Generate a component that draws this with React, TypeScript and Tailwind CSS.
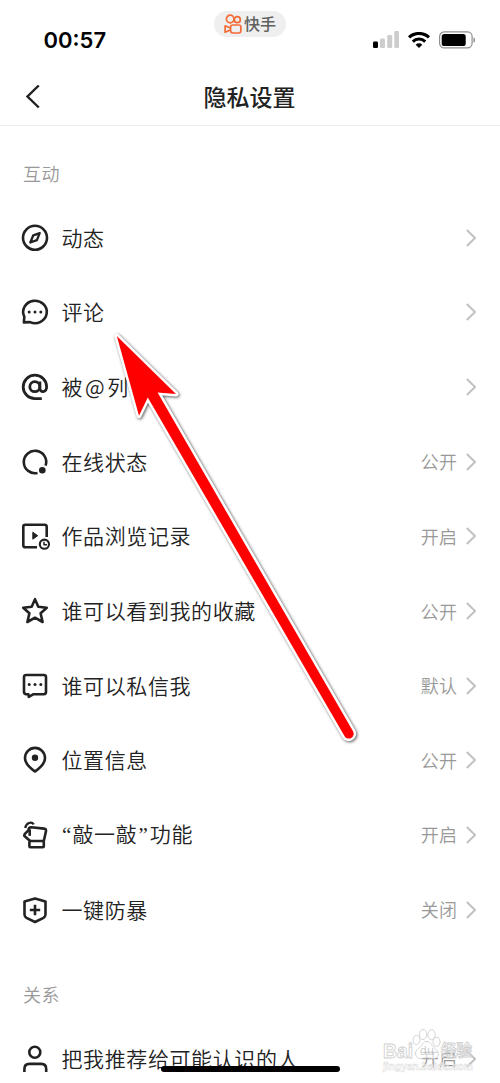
import type { ReactNode } from "react";

interface RowProps {
  icon: ReactNode;
  label: ReactNode;
  value?: string;
}

const Icon = ({ children }: { children: ReactNode }) => (
  <svg
    viewBox="0 0 28 28"
    className="size-7 shrink-0 overflow-visible"
    fill="none"
    stroke="#222"
    strokeWidth="2.6"
    strokeLinejoin="round"
  >
    {children}
  </svg>
);

const Dots = ({ y }: { y: number }) => (
  <g fill="#222" stroke="none">
    <circle cx="8.2" cy={y} r="1.5" />
    <circle cx="14" cy={y} r="1.5" />
    <circle cx="19.8" cy={y} r="1.5" />
  </g>
);

const icons = {
  compass: (
    <Icon>
      <circle cx="14" cy="13.8" r="12" />
      <path d="M18.7 9.1 12.3 11.3 9.3 18.5 15.9 16.1Z" strokeWidth="2.3" />
    </Icon>
  ),
  comment: (
    <Icon>
      <path d="M2.9 24.4 3.3 18.7A11.8 11.2 0 1 1 9 24.1Z" />
      <Dots y={13.9} />
    </Icon>
  ),
  at: (
    <Icon>
      <circle cx="13.8" cy="13.7" r="5" strokeWidth="2.8" />
      <path d="M18.9 8.4V15.2C18.9 20 25.6 19.8 25.6 13.8A11.7 11.7 0 1 0 14 25.6H20.8" strokeWidth="2.8" />
    </Icon>
  ),
  online: (
    <Icon>
      <path d="M16.5 24.9A11.2 11.2 0 1 1 24.6 17.6" />
      <circle cx="21.3" cy="22.3" r="3.3" fill="#222" stroke="none" />
    </Icon>
  ),
  history: (
    <Icon>
      <path d="M16 25.2H4.4Q2.3 25.2 2.3 23.2V4.6Q2.3 2.7 4.4 2.7H23.5Q25.7 2.7 25.7 4.8V15" />
      <path d="M11.8 10.2 16.7 13.7 11.8 17.2Z" fill="#222" strokeWidth="1" />
      <circle cx="23.4" cy="22.2" r="4.6" strokeWidth="2.1" />
      <path d="M23 19.8V22.7H26" strokeWidth="1.5" />
    </Icon>
  ),
  star: (
    <Icon>
      <path d="M14 2.2 17.3 9.8 25.8 10.7 19.6 16.3 21.6 25 14 20.7 6.4 25 8.4 16.3 2.2 10.7 10.7 9.8Z" />
    </Icon>
  ),
  message: (
    <Icon>
      <path d="M5.2 3H22.8Q25 3 25 5.1V20.1Q25 22.2 22.8 22.2H12.6L7.8 24.8 7.4 22.2H5.2Q3 22.2 3 20.1V5.1Q3 3 5.2 3Z" />
      <Dots y={12.6} />
    </Icon>
  ),
  pin: (
    <Icon>
      <path d="M14 25.5C10.5 23 4 18.5 4 12.2A10 10.3 0 0 1 24 12.2C24 18.5 17.5 23 14 25.5Z" />
      <circle cx="14" cy="11.8" r="3.2" fill="#222" stroke="none" />
    </Icon>
  ),
  knock: (
    <Icon>
      <path d="M9.2 20 4 15.6Q2.8 14.4 3.6 13.2L7.4 9.4Q7.6 6.2 10.2 6.2L23 7.6Q25.3 8 25 10L22.8 20" />
      <path d="M8.7 8.4V14.8" />
      <path d="M4.2 7C5.2 1.6 10.4.2 12.8 3.4" strokeWidth="2.3" />
      <rect x="8.4" y="20" width="14.4" height="6.3" rx="1" />
    </Icon>
  ),
  shield: (
    <Icon>
      <path d="M14 2.6 24.5 5.4V18.6Q24.5 20.6 22.5 21.8L14 26 5.5 21.8Q3.5 20.6 3.5 18.6V5.4Z" />
      <path d="M14 8.8V19.2M8.8 14H19.2" />
    </Icon>
  ),
  person: (
    <Icon>
      <circle cx="13.8" cy="7.2" r="5.5" />
      <path d="M3.4 27.5V24Q3.4 18.9 8.4 18.9H20.2Q25.2 18.9 25.2 24V27.5" />
    </Icon>
  ),
};

const interactions: RowProps[] = [
  { icon: icons.compass, label: "动态" },
  { icon: icons.comment, label: "评论" },
  { icon: icons.at, label: <>被<span className="ml-[2px] mr-[2px]">@</span>列表</> },
  { icon: icons.online, label: "在线状态", value: "公开" },
  { icon: icons.history, label: "作品浏览记录", value: "开启" },
  { icon: icons.star, label: "谁可以看到我的收藏", value: "公开" },
  { icon: icons.message, label: "谁可以私信我", value: "默认" },
  { icon: icons.pin, label: "位置信息", value: "公开" },
  {
    icon: icons.knock,
    label: (
      <>
        <span className="inline-block w-[11px] text-center font-['Liberation_Serif'] leading-none">“</span>敲一敲
        <span className="inline-block w-[12.5px] text-center font-['Liberation_Serif'] leading-none">”</span>功能
      </>
    ),
    value: "开启",
  },
  { icon: icons.shield, label: "一键防暴", value: "关闭" },
];

const SettingRow = ({ icon, label, value }: RowProps) => (
  <li className="flex h-[74.65px] items-center pl-[21px] pr-6">
    {icon}
    <span className="ml-[12.5px] pb-[1px] text-[21px] font-[350] leading-none tracking-[0.6px] text-[#222]">{label}</span>
    <span className="ml-auto pb-[1px] text-[18px] font-[350] leading-none tracking-[0.4px] text-[#999]">{value}</span>
    <svg viewBox="0 0 10 18" className="ml-[8.5px] h-[18px] w-[10px]" fill="none" stroke="#c2c2c2" strokeWidth="2">
      <path d="M.8 1 9 9 .8 17" />
    </svg>
  </li>
);

const SectionTitle = ({ children }: { children: ReactNode }) => (
  <h2 className="h-[74.5px] pl-[23px] pt-[31px] text-[18px] font-[350] leading-8 tracking-[0.4px] text-[#999]">{children}</h2>
);

const StatusBar = () => (
  <div className="grid h-[68px] grid-cols-3">
    <div className="pl-[43.5px] pt-[24px] font-['Inter'] text-[22px] font-semibold leading-8 text-black">00:57</div>
    <div className="mt-[11px] flex h-[26px] w-[72px] items-center justify-self-center rounded-full bg-[#efefef] pl-[10px]">
      <svg viewBox="0 0 18 20" className="h-5 w-[18px]" fill="none" stroke="#f26a35" strokeWidth="1.7" strokeLinejoin="round">
        <circle cx="6.2" cy="5" r="3.8" />
        <circle cx="13.3" cy="5.7" r="3" />
        <rect x="6.6" y="11" width="10.3" height="8" rx="2.2" />
        <path d="M6.4 14 1.1 11.8V18.2L6.4 16" />
      </svg>
      <span className="ml-[2px] pb-[2px] text-[16px] font-medium leading-none text-[#606060]">快手</span>
    </div>
    <div className="flex h-[79px] items-center justify-end pr-[25px]">
      <svg viewBox="0 0 26 17" className="h-[17px] w-[26px]" fill="#cdcdcd">
        <rect x="0" y="10.5" width="5" height="6.5" rx="1.3" fill="#000" />
        <rect x="7" y="7.4" width="5" height="9.6" rx="1.3" />
        <rect x="14.2" y="4" width="5" height="13" rx="1.3" />
        <rect x="21.3" y="0" width="4.7" height="17" rx="1.3" />
      </svg>
      <svg viewBox="0 0 22 16" className="ml-[9px] h-4 w-[22px]" fill="none" stroke="#000" strokeWidth="3">
        <path d="M1 5.4A14.5 14.5 0 0 1 21 5.4" />
        <path d="M4.8 9.6A9 9 0 0 1 17.2 9.6" />
        <path d="M11 16 7.7 12.7A4.7 4.7 0 0 1 14.3 12.7Z" fill="#000" stroke="none" />
      </svg>
      <svg viewBox="0 0 36 18" className="ml-[9px] h-[18px] w-[36px]">
        <rect x=".6" y=".9" width="32.5" height="16" rx="4.6" fill="#fff" stroke="#8e8e8e" strokeWidth="1.2" />
        <rect x="2.7" y="3" width="24" height="12" rx="2.6" />
        <path d="M34.5 6.3Q36.2 7.2 36.2 9T34.5 11.7Z" fill="#8e8e8e" />
      </svg>
    </div>
  </div>
);

const Pointer = () => (
  <svg viewBox="0 0 500 1083" className="pointer-events-none absolute left-0 top-0 h-[1083px] w-[500px]">
    <g className="[filter:drop-shadow(1px_1px_1.5px_rgba(0,0,0,0.65))]">
      <path
        d="M116.8 336 176 394 157.6 392.6 353 731.3A4.8 4.8 0 0 1 344.6 736.2L147.8 397.5 139 415.7Z"
        fill="#fff"
        stroke="#fff"
        strokeWidth="5"
        strokeLinejoin="round"
      />
    </g>
    <path
      d="M116.8 336 176 394 157.6 392.6 353 731.3A4.8 4.8 0 0 1 344.6 736.2L147.8 397.5 139 415.7Z"
      fill="#f00"
    />
  </svg>
);

const Watermark = () => (
  <svg
    viewBox="0 0 96 50"
    className="pointer-events-none absolute left-[380px] top-[1024px] h-[50px] w-[96px]"
    fill="#fff"
    fillOpacity=".6"
    stroke="#cfcfcf"
    strokeWidth=".9"
  >
    <ellipse cx="36.5" cy="16" rx="3.5" ry="4.7" />
    <ellipse cx="43" cy="10.5" rx="3.7" ry="5" />
    <ellipse cx="51.5" cy="10.7" rx="3.7" ry="5" />
    <ellipse cx="56.5" cy="17.8" rx="3.5" ry="4.5" />
    <path d="M47 17.5C43 17.5 42.5 21 39.5 23.5 35.5 26.8 34.5 29 36.5 32.5 39 36 43 33.8 47 33.8S54.5 36 57.3 32.8C59.5 29.5 57.5 26.5 54.3 23.8 51 21 50.5 17.5 47 17.5Z" />
    <g fontFamily="Liberation Sans, Noto Sans CJK SC, sans-serif" fontWeight="bold">
      <text x="3" y="33.5" fontSize="21" textLength="30" lengthAdjust="spacingAndGlyphs">Bai</text>
      <text x="40" y="30.5" fontSize="12" fontWeight="normal" fill="#aaa" stroke="none" textLength="14">du</text>
      <text x="61" y="32" fontSize="15.5">经验</text>
      <text x="3" y="45.5" fontSize="11" fill="#fff" stroke="#d9d9d9" strokeWidth=".5" textLength="90" lengthAdjust="spacingAndGlyphs">jingyan.baidu.com</text>
    </g>
  </svg>
);

const App = () => (
  <div lang="zh-CN" className="relative h-[1083px] w-[500px] overflow-hidden bg-white font-['Noto_Sans_CJK_SC',sans-serif]">
    <div className="h-[1071.5px] overflow-hidden">
      <header className="h-[126px] border-b border-[#ececec]">
        <StatusBar />
        <div className="grid h-[57px] grid-cols-[60px_1fr_60px] items-center">
          <svg viewBox="0 0 14 24" className="ml-[26px] h-6 w-[14px]" fill="none" stroke="#222" strokeWidth="2.4">
            <path d="M12.8 .5 1.5 11.5 12.8 22.5" />
          </svg>
          <h1 className="pb-[1px] pr-[1px] text-center text-[23px] font-medium leading-none text-[#222]">隐私设置</h1>
        </div>
      </header>
      <SectionTitle>互动</SectionTitle>
      <ul>
        {interactions.map((row, i) => (
          <SettingRow key={i} {...row} />
        ))}
      </ul>
      <SectionTitle>关系</SectionTitle>
      <ul>
        <SettingRow icon={icons.person} label="把我推荐给可能认识的人" value="开启" />
      </ul>
    </div>
    <div className="absolute left-[161px] top-[1066px] h-[6px] w-[179px] rounded-full bg-black" />
    <Watermark />
    <Pointer />
  </div>
);

export default App;
